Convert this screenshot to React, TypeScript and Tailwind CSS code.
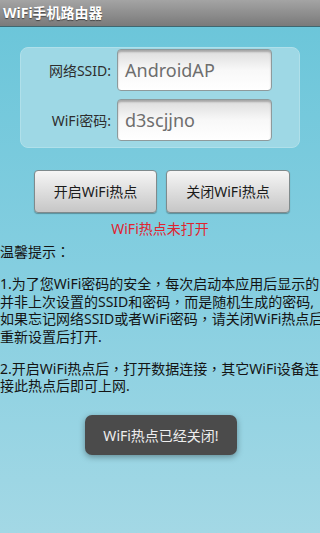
const tc = { fontFamily: '"Noto Sans CJK TC", sans-serif' };

// Android draws full-width punctuation centred; the TC font does the same
function Line({ text }: { text: string }) {
  const parts = text.split(/([，：])/);
  return (
    <div>
      {parts.map((p, i) =>
        p === "，" || p === "：" ? (
          <span key={i} style={tc}>
            {p}
          </span>
        ) : (
          <span key={i}>{p}</span>
        )
      )}
    </div>
  );
}

export default function App() {
  const tip1 = [
    "1.为了您WiFi密码的安全，每次启动本应用后显示的",
    "并非上次设置的SSID和密码，而是随机生成的密码,",
    "如果忘记网络SSID或者WiFi密码，请关闭WiFi热点后",
    "重新设置后打开.",
  ];
  const tip2 = ["2.开启WiFi热点后，打开数据连接，其它WiFi设备连", "接此热点后即可上网."];

  return (
    <div
      className="relative w-[320px] h-[533px] overflow-hidden bg-gradient-to-b from-[#69c5d9] via-[#84cee0] to-[#a3d8e5]"
      style={{ fontFamily: '"Noto Sans", "Noto Sans CJK SC", sans-serif' }}
    >
      {/* title bar */}
      <div className="h-[27px] flex items-center pl-[3px] bg-gradient-to-b from-[#a4a4a4] to-[#7a7a7a] border-b border-[#3f6770]">
        <span className="text-white font-bold text-[14px] leading-none [text-shadow:0_1px_1px_rgba(0,0,0,0.5)]">
          WiFi手机路由器
        </span>
      </div>

      {/* form panel */}
      <div className="mx-[20px] mt-[20px] h-[101px] rounded-[8px] bg-[#9ed8e5] border border-[#b0e0ea] pt-[1px] flex flex-col gap-[8px]">
        <div className="flex items-center">
          <div className="w-[90px] text-right text-[14px] text-[#2e2e2e]">网络SSID:</div>
          <div className="ml-[6px] w-[155px] h-[42px] rounded-[4px] border border-[#8e9a9c] bg-gradient-to-b from-[#dcdcdc] via-[#f8f8f8] to-[#ffffff] shadow-[inset_0_2px_2px_rgba(0,0,0,0.25)] flex items-center pl-[7px] text-[18px] text-[#6e6e6e]">
            AndroidAP
          </div>
        </div>
        <div className="flex items-center">
          <div className="w-[90px] text-right text-[14px] text-[#2e2e2e]">WiFi密码:</div>
          <div className="ml-[6px] w-[155px] h-[42px] rounded-[4px] border border-[#8e9a9c] bg-gradient-to-b from-[#dcdcdc] via-[#f8f8f8] to-[#ffffff] shadow-[inset_0_2px_2px_rgba(0,0,0,0.25)] flex items-center pl-[7px] text-[18px] text-[#6e6e6e]">
            d3scjjno
          </div>
        </div>
      </div>

      {/* buttons */}
      <div className="mt-[22px] flex gap-[9px] pl-[34px]">
        <button className="w-[123px] h-[43px] rounded-[4px] border border-[#7f8a8c] bg-gradient-to-b from-[#f6f6f6] to-[#c6c6c6] shadow-[0_1px_1px_rgba(0,0,0,0.3)] text-[14px] text-[#1a1a1a]">
          开启WiFi热点
        </button>
        <button className="w-[124px] h-[43px] rounded-[4px] border border-[#7f8a8c] bg-gradient-to-b from-[#f6f6f6] to-[#c6c6c6] shadow-[0_1px_1px_rgba(0,0,0,0.3)] text-[14px] text-[#1a1a1a]">
          关闭WiFi热点
        </button>
      </div>

      <div className="mt-[7px] h-[18px] text-center text-[14px] leading-[18px] text-[#e0232f]">WiFi热点未打开</div>

      {/* tips */}
      <div className="mt-[5px] text-[14px] leading-[17.5px] text-[#141414] whitespace-nowrap">
        <Line text="温馨提示：" />
        <div className="mt-[14.5px]">
          {tip1.map((l) => (
            <Line key={l} text={l} />
          ))}
        </div>
        <div className="mt-[14.5px]">
          {tip2.map((l) => (
            <Line key={l} text={l} />
          ))}
        </div>
      </div>

      {/* toast */}
      <div className="absolute left-[85px] top-[415px] w-[152px] h-[40px] rounded-[7px] bg-[#4b4b4b] shadow-[0_2px_6px_rgba(0,0,0,0.35)] flex items-center justify-center text-[14px] text-[#eeeeee]">
        WiFi热点已经关闭!
      </div>
    </div>
  );
}
